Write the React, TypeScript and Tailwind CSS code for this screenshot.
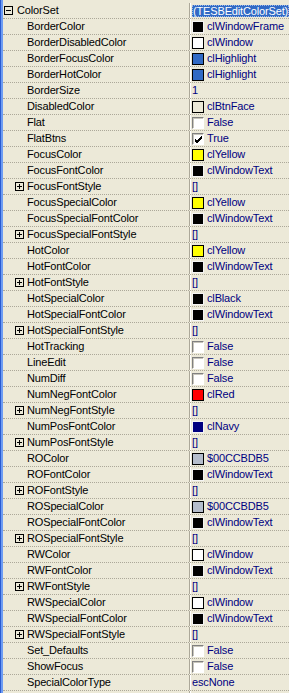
type Kind = "sel" | "text" | "color" | "check";

type Prop = {
  name: string;
  level?: 0 | 1;
  expand?: "+" | "-";
  kind: Kind;
  value: string;
  color?: string;
  checked?: boolean;
};

const BLACK = "#000000";
const HILITE = "#316ac5";

const props: Prop[] = [
  { name: "ColorSet", level: 0, expand: "-", kind: "sel", value: "(TESBEditColorSet)" },
  { name: "BorderColor", kind: "color", color: BLACK, value: "clWindowFrame" },
  { name: "BorderDisabledColor", kind: "color", color: "#ffffff", value: "clWindow" },
  { name: "BorderFocusColor", kind: "color", color: HILITE, value: "clHighlight" },
  { name: "BorderHotColor", kind: "color", color: HILITE, value: "clHighlight" },
  { name: "BorderSize", kind: "text", value: "1" },
  { name: "DisabledColor", kind: "color", color: "#ece9d8", value: "clBtnFace" },
  { name: "Flat", kind: "check", value: "False" },
  { name: "FlatBtns", kind: "check", checked: true, value: "True" },
  { name: "FocusColor", kind: "color", color: "#ffff00", value: "clYellow" },
  { name: "FocusFontColor", kind: "color", color: BLACK, value: "clWindowText" },
  { name: "FocusFontStyle", expand: "+", kind: "text", value: "[]" },
  { name: "FocusSpecialColor", kind: "color", color: "#ffff00", value: "clYellow" },
  { name: "FocusSpecialFontColor", kind: "color", color: BLACK, value: "clWindowText" },
  { name: "FocusSpecialFontStyle", expand: "+", kind: "text", value: "[]" },
  { name: "HotColor", kind: "color", color: "#ffff00", value: "clYellow" },
  { name: "HotFontColor", kind: "color", color: BLACK, value: "clWindowText" },
  { name: "HotFontStyle", expand: "+", kind: "text", value: "[]" },
  { name: "HotSpecialColor", kind: "color", color: BLACK, value: "clBlack" },
  { name: "HotSpecialFontColor", kind: "color", color: BLACK, value: "clWindowText" },
  { name: "HotSpecialFontStyle", expand: "+", kind: "text", value: "[]" },
  { name: "HotTracking", kind: "check", value: "False" },
  { name: "LineEdit", kind: "check", value: "False" },
  { name: "NumDiff", kind: "check", value: "False" },
  { name: "NumNegFontColor", kind: "color", color: "#ff0000", value: "clRed" },
  { name: "NumNegFontStyle", expand: "+", kind: "text", value: "[]" },
  { name: "NumPosFontColor", kind: "color", color: "#000080", value: "clNavy" },
  { name: "NumPosFontStyle", expand: "+", kind: "text", value: "[]" },
  { name: "ROColor", kind: "color", color: "#b5bdcc", value: "$00CCBDB5" },
  { name: "ROFontColor", kind: "color", color: BLACK, value: "clWindowText" },
  { name: "ROFontStyle", expand: "+", kind: "text", value: "[]" },
  { name: "ROSpecialColor", kind: "color", color: "#b5bdcc", value: "$00CCBDB5" },
  { name: "ROSpecialFontColor", kind: "color", color: BLACK, value: "clWindowText" },
  { name: "ROSpecialFontStyle", expand: "+", kind: "text", value: "[]" },
  { name: "RWColor", kind: "color", color: "#ffffff", value: "clWindow" },
  { name: "RWFontColor", kind: "color", color: BLACK, value: "clWindowText" },
  { name: "RWFontStyle", expand: "+", kind: "text", value: "[]" },
  { name: "RWSpecialColor", kind: "color", color: "#ffffff", value: "clWindow" },
  { name: "RWSpecialFontColor", kind: "color", color: BLACK, value: "clWindowText" },
  { name: "RWSpecialFontStyle", expand: "+", kind: "text", value: "[]" },
  { name: "Set_Defaults", kind: "check", value: "False" },
  { name: "ShowFocus", kind: "check", value: "False" },
  { name: "SpecialColorType", kind: "text", value: "escNone" },
  // only the top edge of the next row's checkbox shows
  { name: "", kind: "check", value: "" },
];

// dark swatches get a light frame, light ones a black one
function isDark(c: string) {
  const n = parseInt(c.slice(1), 16);
  const r = (n >> 16) & 255, g = (n >> 8) & 255, b = n & 255;
  return r <= 192 && g <= 192 && b <= 192 && c !== HILITE;
}

function ExpandBox({ sign }: { sign: "+" | "-" }) {
  return (
    <span className="relative w-[9px] h-[9px] border border-black shrink-0">
      <span className="absolute left-[1px] top-[3px] w-[5px] h-px bg-black" />
      {sign === "+" && <span className="absolute left-[3px] top-[1px] w-px h-[5px] bg-black" />}
    </span>
  );
}

function Swatch({ color }: { color: string }) {
  const dark = isDark(color);
  return (
    <span
      className={
        "w-[12px] h-[12px] border shrink-0 mr-[3px] " + (dark ? "border-[#f4f4f4]" : "border-black")
      }
      style={{ backgroundColor: color }}
    />
  );
}

function Check({ on }: { on?: boolean }) {
  return (
    <span className="relative w-[12px] h-[12px] shrink-0 mr-[3px] bg-white border-t border-l border-[#808080] border-r border-b border-r-[#ffffff] border-b-[#ffffff] shadow-[inset_1px_1px_0_#c8c6bc]">
      {on && (
        <svg className="absolute left-[1px] top-[1px]" width="9" height="9" viewBox="0 0 9 9">
          <path d="M1 4 L3 6 L8 1 M1 5 L3 7 L8 2 M1 6 L3 8 L8 3" stroke="#000" strokeWidth="1" fill="none" shapeRendering="crispEdges" />
        </svg>
      )}
    </span>
  );
}

function Value({ p }: { p: Prop }) {
  if (p.kind === "sel") {
    return (
      <span className="h-[12px] leading-[12px] px-[1px] bg-[#316ac5] text-white outline-1 outline-dotted outline-[#9db8e8] -outline-offset-1 whitespace-nowrap">
        {p.value}
      </span>
    );
  }
  return (
    <>
      {p.kind === "color" && <Swatch color={p.color!} />}
      {p.kind === "check" && <Check on={p.checked} />}
      {p.value && <span className="text-[#000080] whitespace-nowrap">{p.value}</span>}
    </>
  );
}

export default function App() {
  return (
    <div className="w-[289px] h-[693px] overflow-hidden flex bg-[#ece9d8] font-['Liberation_Sans',Arial,sans-serif] text-[11px] tracking-[-0.15px] leading-[15px]">
      <div className="w-[3px] shrink-0 flex">
        <div className="w-px bg-[#2a5bd0]" />
        <div className="w-[2px] bg-[#6d9cf3]" />
      </div>
      <div className="flex-1 pt-[3px]">
        {props.map((p, i) => (
          <div key={i} className="flex h-[16px] border-b border-dotted border-[#aca899]">
            <div
              className={
                "w-[187px] shrink-0 flex items-center border-r border-[#aca899] text-black " +
                (p.level === 0 ? "pl-[1px]" : p.expand ? "pl-[12px]" : "pl-[24px]")
              }
            >
              {p.expand && (
                <span className={p.level === 0 ? "mr-[4px] flex" : "mr-[3px] flex"}>
                  <ExpandBox sign={p.expand} />
                </span>
              )}
              {p.name && <span className="whitespace-nowrap">{p.name}</span>}
            </div>
            <div className="flex-1 min-w-0 flex items-center border-l border-white pl-[1px] overflow-hidden">
              <Value p={p} />
            </div>
          </div>
        ))}
      </div>
    </div>
  );
}
